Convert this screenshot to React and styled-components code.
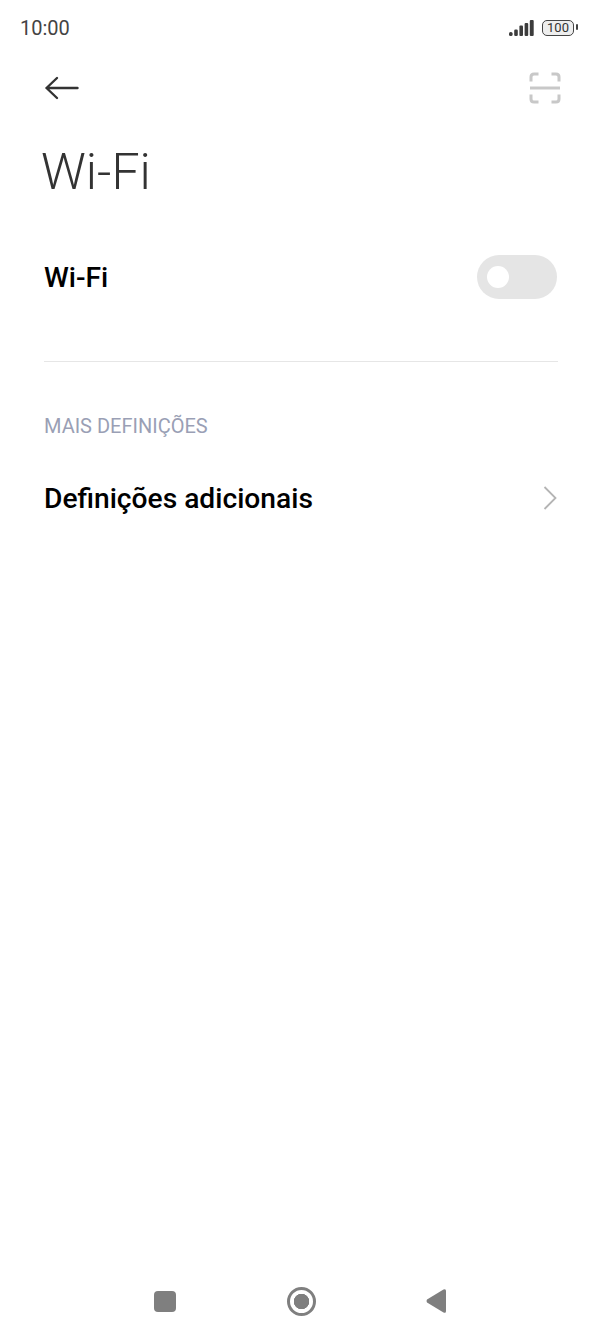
import styled, { createGlobalStyle } from "styled-components"

const GlobalStyle = createGlobalStyle`
  html, body {
    margin: 0;
    padding: 0;
    background: #fff;
  }
  body {
    font-family: Roboto, "Noto Sans", sans-serif;
  }
`

export default function App() {
  return (
    <>
      <GlobalStyle />
      <Styled.Screen>
        <Styled.StatusBar>
          <Styled.Clock>10:00</Styled.Clock>
          <Styled.StatusIcons>
            <svg width="25" height="16" viewBox="0 0 25 16">
              <rect x="0" y="12" width="3.6" height="4" rx="1.6" fill="#3c3c3c" />
              <rect x="5.2" y="9.5" width="3.6" height="6.5" rx="1.2" fill="#3c3c3c" />
              <rect x="10.4" y="5.5" width="3.6" height="10.5" rx="1" fill="#3c3c3c" />
              <rect x="15.6" y="3" width="3.6" height="13" rx="1" fill="#3c3c3c" />
              <rect x="20.8" y="0" width="3.9" height="16" rx="1" fill="#3c3c3c" />
            </svg>
            <Styled.Battery>100</Styled.Battery>
          </Styled.StatusIcons>
        </Styled.StatusBar>

        <Styled.TopBar>
          <svg width="36" height="24" viewBox="0 0 36 24" fill="none" stroke="#333" strokeWidth="2.4" strokeLinecap="round" strokeLinejoin="round">
            <path d="M2.5 12H33.5M13 2 2.5 12 13 22" />
          </svg>
          <svg width="32" height="32" viewBox="0 0 32 32" fill="none" stroke="#c8c8c8" strokeWidth="3">
            <path d="M2 9.5V5Q2 2 5 2H9.5M22.5 2H27Q30 2 30 5V9.5M2 22.5V27Q2 30 5 30H9.5M22.5 30H27Q30 30 30 27V22.5" />
            <path d="M1 16H31" />
          </svg>
        </Styled.TopBar>

        <Styled.Title>Wi-Fi</Styled.Title>

        <Styled.Row $height={44} $top={55}>
          <Styled.RowLabel>Wi-Fi</Styled.RowLabel>
          <Styled.Switch />
        </Styled.Row>

        <Styled.Divider />

        <Styled.SectionLabel>MAIS DEFINIÇÕES</Styled.SectionLabel>

        <Styled.Row $height={30}>
          <Styled.RowLabel>Definições adicionais</Styled.RowLabel>
          <svg width="14" height="24" viewBox="0 0 14 24" fill="none" stroke="#b4b4b4" strokeWidth="1.8">
            <path d="M1.5 1 12.5 12 1.5 23" />
          </svg>
        </Styled.Row>

        <Styled.NavBar>
          <Styled.NavSquare />
          <Styled.NavCircle />
          <svg width="20" height="26" viewBox="0 0 20 26">
            <path d="M17.5 1.5Q20 .3 20 3V23Q20 25.7 17.5 24.5L1 14.5Q0 13 1 11.5Z" fill="#7f7f7f" />
          </svg>
        </Styled.NavBar>
      </Styled.Screen>
    </>
  )
}

const Styled = {
  Screen: styled.div`
    display: flex;
    flex-direction: column;
    width: 602px;
    height: 1338px;
    background: #fff;
    overflow: hidden;
  `,
  StatusBar: styled.div`
    display: flex;
    justify-content: space-between;
    align-items: center;
    height: 24px;
    margin-top: 16px;
    padding: 0 28px 0 20px;
  `,
  Clock: styled.span`
    font-size: 20px;
    color: #444;
  `,
  StatusIcons: styled.div`
    display: flex;
    align-items: center;
    gap: 8px;
  `,
  Battery: styled.div`
    position: relative;
    box-sizing: border-box;
    width: 32px;
    height: 16px;
    border: 1.5px solid #444;
    border-radius: 5px;
    font-size: 13px;
    line-height: 13px;
    text-align: center;
    color: #333;
    background: #eee;

    &::after {
      content: "";
      position: absolute;
      top: 3px;
      right: -5px;
      width: 2px;
      height: 6px;
      border-radius: 1px;
      background: #444;
    }
  `,
  TopBar: styled.div`
    display: flex;
    justify-content: space-between;
    align-items: center;
    height: 32px;
    margin-top: 32px;
    padding: 0 41px 0 44px;
  `,
  Title: styled.h1`
    margin: 40px 0 0 41px;
    font-size: 50px;
    font-weight: 300;
    line-height: 56px;
    color: #333;
  `,
  Row: styled.div`
    display: flex;
    justify-content: space-between;
    align-items: center;
    height: ${(p) => p.$height}px;
    margin-top: ${(p) => p.$top || 0}px;
    padding: 0 45px 0 44px;
  `,
  RowLabel: styled.span`
    font-size: 28.2px;
    font-weight: 500;
    color: #000;
  `,
  Switch: styled.div`
    position: relative;
    width: 80px;
    height: 44px;
    border-radius: 22px;
    background: #e5e5e5;

    &::after {
      content: "";
      position: absolute;
      top: 11px;
      left: 10px;
      width: 22px;
      height: 22px;
      border-radius: 50%;
      background: #fff;
    }
  `,
  Divider: styled.div`
    height: 1px;
    margin: 62px 44px 0;
    background: #e6e6e6;
  `,
  SectionLabel: styled.div`
    margin: 52px 44px 45px;
    font-size: 20px;
    line-height: 24px;
    color: #9a9fb5;
  `,
  NavBar: styled.div`
    display: flex;
    justify-content: space-between;
    align-items: center;
    width: 292px;
    height: 30px;
    margin: auto 0 22px 154px;
  `,
  NavSquare: styled.div`
    width: 22px;
    height: 21px;
    border-radius: 4px;
    background: #7f7f7f;
  `,
  NavCircle: styled.div`
    box-sizing: border-box;
    width: 29px;
    height: 29px;
    border: 3px solid #7f7f7f;
    border-radius: 50%;
    background: radial-gradient(circle, #7f7f7f 0 7.5px, #fff 8px);
  `,
}
